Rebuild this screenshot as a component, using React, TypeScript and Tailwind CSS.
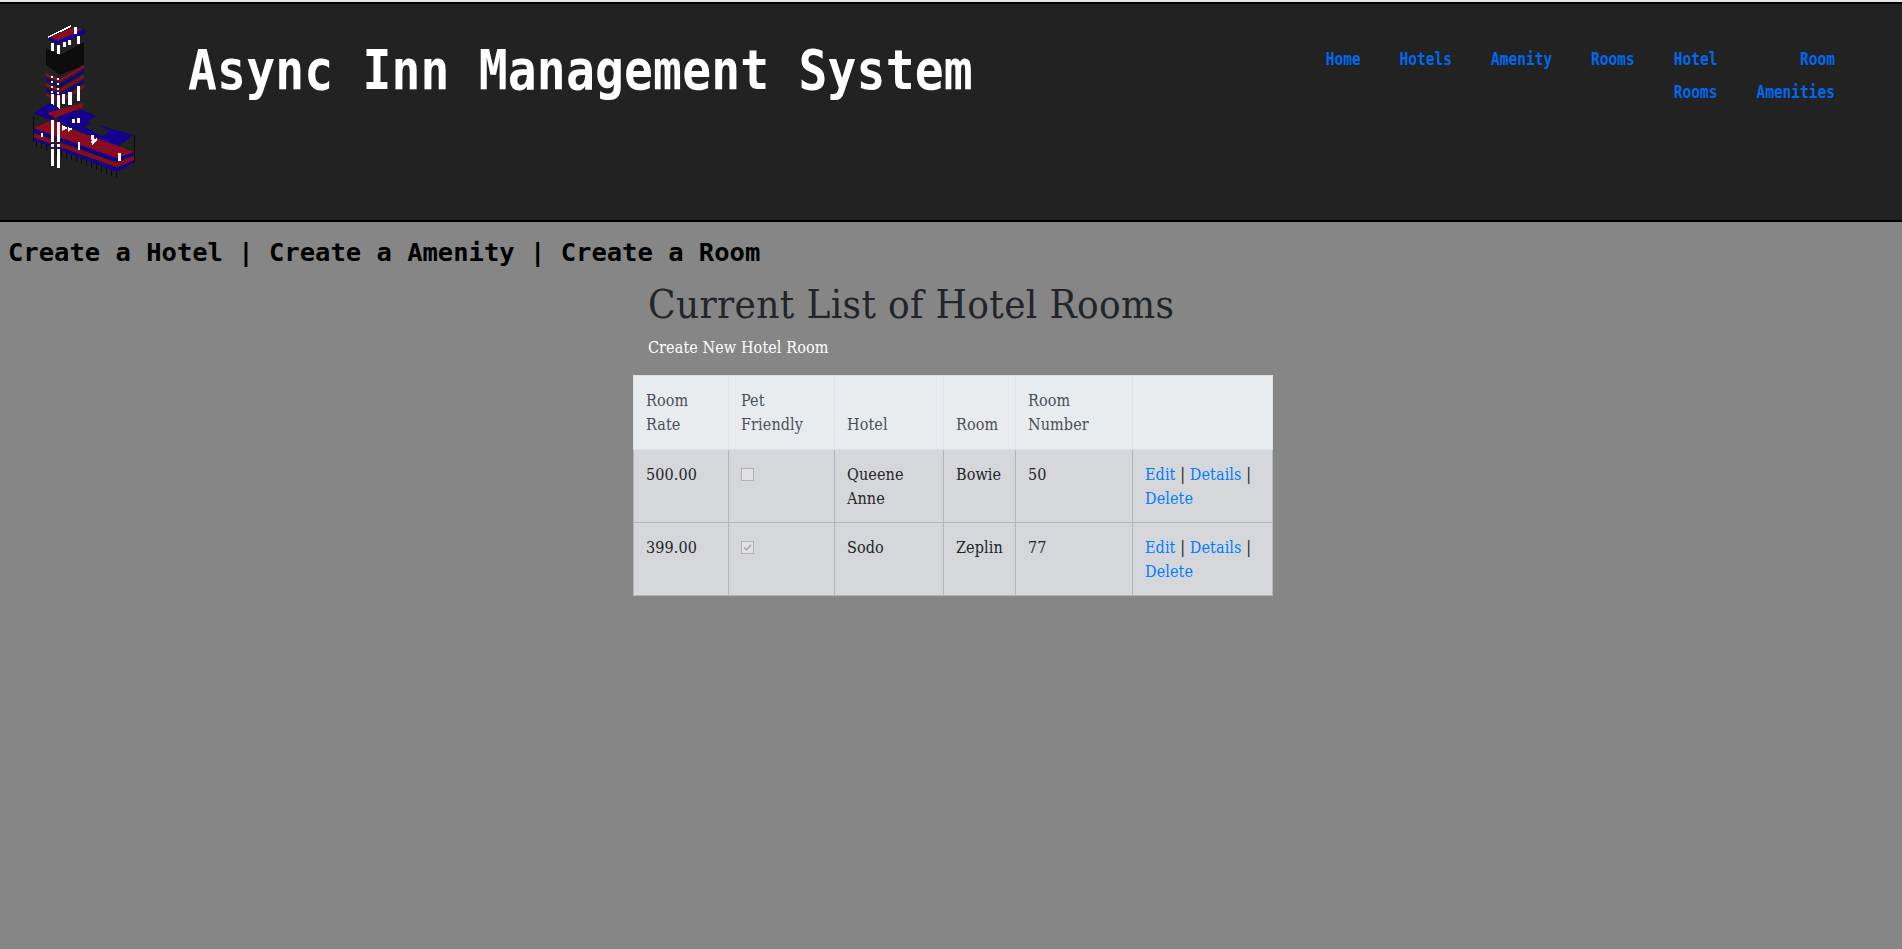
const navLinks = ['Home', 'Hotels', 'Amenity', 'Rooms'];

const rooms = [
  { rate: '500.00', pet: false, hotel: 'Queene Anne', room: 'Bowie', number: '50' },
  { rate: '399.00', pet: true, hotel: 'Sodo', room: 'Zeplin', number: '77' },
];

const RED = '#8b0a1f';
const BLUE = '#14008c';

const stripes = [0, 1, 2, 3, 4];
const legs = Array.from({ length: 17 }, (_, i) => i);

// viewBox uses page pixel coordinates so the shapes can be read off the screenshot
function Logo() {
  return (
    <svg width="110" height="160" viewBox="30 20 110 160" shapeRendering="crispEdges" className="shrink-0">
      {/* legs under the low block */}
      {legs.map((i) => {
        const x = 36 + i * 5;
        const y = 141 + i * 1.92;
        return <path key={i} d={`M${x} ${y}v6`} stroke="#0a0a0a" strokeWidth="1" />;
      })}

      {/* tower top */}
      <path d="M46 48l14 7 24-13v23l-24 10-14-10z" fill="#0c0c0c" />
      <path d="M50 37l25-10 8 3-25 12z" fill={RED} />
      <path d="M46 38l9 5 30-12-2-2-8 4-17 8-8-4z" fill={BLUE} />
      <path d="M55 43l30-12v3l-30 12z" fill={BLUE} />
      <path d="M47 37l24-12v2L48 38z" fill="#fff" />
      <path d="M74 27h3v7h-3zM51 43h3v8h-3zM57 45h3v9h-3zM63 42h3v5h-3zM68 40h3v5h-3zM77 36h3v8h-3z" fill="#fff" />

      {/* stripes below the black section */}
      {stripes.map((i) => (
        <path
          key={i}
          d={`M46 ${73 + i * 5}l14 6 24-14v3l-24 14-14-6z`}
          fill={i % 2 === 0 ? RED : BLUE}
        />
      ))}
      <path d="M51 76h2v2h-2zM57 78h2v2h-2zM51 81h2v2h-2zM57 83h2v2h-2zM51 86h2v2h-2zM57 88h2v2h-2zM51 91h2v2h-2zM57 92h2v2h-2z" fill="#fff" />
      <path d="M51 94h3v17h-3zM57 95h3v18h-3zM62 94h3v10h-3zM68 92h4v13h-4zM77 86h3v15h-3z" fill="#fff" />

      {/* upper plate */}
      <path d="M33 113l17-10 17 10-17 7z" fill={BLUE} />
      <path d="M58 113l25-3 13 6-9 6 47 13-17 12-59-25z" fill={BLUE} />
      <path d="M83 126l9-3 19 8-9 5z" fill="#222222" />
      <path d="M47 113l36-10v4l-28 11z" fill={RED} />
      <path d="M72 119h3v4h-3zM77 118h3v5h-3z" fill="#fff" />

      {/* low block */}
      <path d="M33 140l84 32 17-9v-3l-17 8-84-31z" fill={BLUE} />
      <path d="M33 137l84 30 17-7v-4l-17 7-84-30z" fill={RED} />
      <path d="M33 132l84 30 17-7v-3l-17 6-84-30z" fill={BLUE} />
      <path d="M34 128l18-8 8 4 3 3 28 9 43 16-17 6z" fill={RED} />
      <path d="M33 117v25M134 135v28" stroke="#0a0a0a" strokeWidth="1" />

      <path d="M51 120h3v46h-3zM57 122h3v46h-3z" fill="#fff" />
      <path d="M62 125l6 3-6 3zM68 127l5 2-5 3zM41 133h2v4h-2zM78 142h2v8h-2zM91 135h3v5h-3zM91 141l6-3v3l-5 4zM118 153h3v8h-3z" fill="#fff" />
      <path d="M51 142h9v2h-9zM51 147h9v2h-9z" fill="#222222" />
    </svg>
  );
}

function PetBox({ checked }: { checked: boolean }) {
  return (
    <div className="mt-[5px] flex h-[13px] w-[13px] items-center justify-center border border-[#b2b2b4] bg-[#e2e2e3]">
      {checked && (
        <svg width="11" height="11" viewBox="0 0 11 11">
          <path d="M2 5.5l2.5 2.5L9 3" fill="none" stroke="#9a9a9c" strokeWidth="1.2" />
        </svg>
      )}
    </div>
  );
}

const headCell = 'border border-[#dee2e6] pl-[12px] pr-[10px] py-[12px] text-left font-normal';
const bodyCell = 'border border-[#b5b6ba] pl-[12px] pr-[10px] pt-[13px] pb-[11px]';

function App() {
  return (
    <div className="min-h-[949px] bg-[#868686] font-['DejaVu_Serif_Condensed','DejaVu_Serif',serif]">
      <div className="h-[2px] bg-[#e4e4e4]" />
      <header className="flex h-[220px] items-start justify-between border-y-2 border-black bg-[#222222]">
        <div className="flex items-start">
          <div className="pl-[30px] pt-[16px]">
            <Logo />
          </div>
          <h1 className="ml-[48px] mt-[35px] origin-bottom scale-y-[1.14] font-['DejaVu_Sans_Mono',monospace] text-[48px] font-bold tracking-[0.17px] text-white">
            Async Inn Management System
          </h1>
        </div>
        <nav className="mr-[67px] mt-[39px] flex origin-top scale-y-[1.2] gap-[39px] font-['DejaVu_Sans_Mono',monospace] text-[14.5px] leading-[27.5px] font-bold text-[#0069ef]">
          {navLinks.map((l) => (
            <a key={l}>{l}</a>
          ))}
          <a>
            Hotel
            <br />
            Rooms
          </a>
          <a className="text-right">
            Room
            <br />
            Amenities
          </a>
        </nav>
      </header>

      <p className="pl-2 pt-[12px] font-['DejaVu_Sans_Mono',monospace] text-[25.5px] leading-[36px] font-bold text-black">
        Create a Hotel | Create a Amenity | Create a Room
      </p>

      <main className="ml-[633px] w-[640px]">
        <h2 className="pl-[15px] pt-[10px] text-[40px] leading-[48px] tracking-[0.37px] text-[#212529]">
          Current List of Hotel Rooms
        </h2>
        <a className="mt-[8px] block pl-[15px] text-base tracking-[0.1px] text-white">Create New Hotel Room</a>
        <table className="mt-[15px] w-[640px] table-fixed border-collapse text-base leading-6 tracking-[0.1px] text-[#212529]">
          <thead className="bg-[#e9ecef] text-[#495057]">
            <tr className="h-[74px] align-bottom">
              <th className={`${headCell} w-[95px]`}>Room Rate</th>
              <th className={`${headCell} w-[106px]`}>Pet Friendly</th>
              <th className={`${headCell} w-[109px]`}>Hotel</th>
              <th className={`${headCell} w-[72px]`}>Room</th>
              <th className={`${headCell} w-[117px]`}>Room Number</th>
              <th className="border border-[#dee2e6]"></th>
            </tr>
          </thead>
          <tbody className="bg-[#d6d7da] align-top">
            {rooms.map((r) => (
              <tr key={r.rate}>
                <td className={bodyCell}>{r.rate}</td>
                <td className={bodyCell}>
                  <PetBox checked={r.pet} />
                </td>
                <td className={bodyCell}>{r.hotel}</td>
                <td className={bodyCell}>{r.room}</td>
                <td className={bodyCell}>{r.number}</td>
                <td className={bodyCell}>
                  <a className="text-[#007bff]">Edit</a> | <a className="text-[#007bff]">Details</a> |{' '}
                  <a className="text-[#007bff]">Delete</a>
                </td>
              </tr>
            ))}
          </tbody>
        </table>
      </main>
    </div>
  );
}

export default App;
